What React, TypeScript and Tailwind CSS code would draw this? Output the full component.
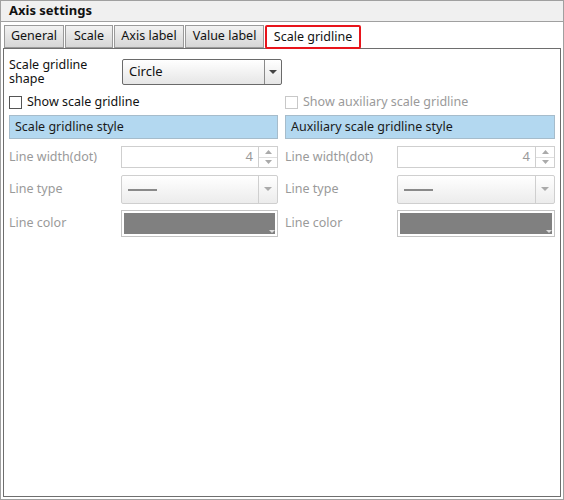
import React from 'react'

const font = { fontFamily: '"Noto Sans", "Open Sans", sans-serif' }

function Tab({ label, active, w }: { label: string; active?: boolean; w: string }) {
  if (active) {
    return (
      <div className={`${w} h-[24px] -mb-px flex items-center justify-center bg-white border-2 border-[#e8141b] rounded-[2px] text-[12.5px] text-[#111]`}>
        {label}
      </div>
    )
  }
  return (
    <div className={`${w} h-[23px] flex items-center justify-center bg-gradient-to-b from-[#f2f2f2] to-[#d6d6d6] border border-[#9a9a9a] text-[12.5px] text-[#111]`}>
      {label}
    </div>
  )
}

function SectionBar({ label }: { label: string }) {
  return (
    <div className="h-[24px] flex items-center pl-[5px] bg-[#b3d8f0] border border-[#a6bccb] text-[12.5px] text-[#1a1a1a]">
      {label}
    </div>
  )
}

function Caret({ color = '#555' }: { color?: string }) {
  return (
    <svg width="8" height="5" viewBox="0 0 8 5">
      <path d="M0 0 L8 0 L4 4 Z" fill={color} />
    </svg>
  )
}

function Checkbox({ label, disabled }: { label: string; disabled?: boolean }) {
  return (
    <div className={`flex items-center gap-[5px] h-[14px] text-[12.5px] ${disabled ? 'text-[#9a9a9a]' : 'text-[#111]'}`}>
      <span className={`w-[13px] h-[13px] border ${disabled ? 'border-[#c8c8c8]' : 'border-[#555]'} bg-white`} />
      {label}
    </div>
  )
}

function StyleRows() {
  return (
    <div className="flex flex-col mt-[7px] text-[12.5px] text-[#9a9a9a]">
      <div className="flex items-center h-[22px]">
        <div className="w-[112px]">Line width(dot)</div>
        <div className="flex-1 h-[22px] flex border border-[#cfcfcf] bg-white">
          <div className="flex-1 flex items-center justify-end pr-[5px] text-[13px] text-[#9a9a9a]">4</div>
          <div className="w-[19px] border-l border-[#cfcfcf] flex flex-col">
            <div className="flex-1 flex items-center justify-center border-b border-[#dedede]">
              <svg width="7" height="4" viewBox="0 0 7 4"><path d="M0 4 L7 4 L3.5 0 Z" fill="#aaa" /></svg>
            </div>
            <div className="flex-1 flex items-center justify-center">
              <svg width="7" height="4" viewBox="0 0 7 4"><path d="M0 0 L7 0 L3.5 4 Z" fill="#aaa" /></svg>
            </div>
          </div>
        </div>
      </div>
      <div className="flex items-center h-[29px] mt-[7px]">
        <div className="w-[112px]">Line type</div>
        <div className="flex-1 h-[29px] flex border border-[#cfcfcf] rounded-[2px] bg-gradient-to-b from-white to-[#ececec]">
          <div className="flex-1 flex items-center pl-[6px]">
            <div className="w-[29px] h-[2px] bg-[#8a8a8a]" />
          </div>
          <div className="w-[19px] border-l border-[#cfcfcf] flex items-center justify-center">
            <Caret color="#aaa" />
          </div>
        </div>
      </div>
      <div className="flex items-center h-[27px] mt-[6px]">
        <div className="w-[112px]">Line color</div>
        <div className="flex-1 h-[27px] border border-[#c4c4c4] bg-white p-[2px] relative">
          <div className="w-full h-full bg-[#808080]" />
          <svg className="absolute right-[2px] bottom-[2px]" width="6" height="4" viewBox="0 0 6 4">
            <path d="M0 0 L6 0 L3 3 Z" fill="#ddd" />
          </svg>
        </div>
      </div>
    </div>
  )
}

export default function App() {
  return (
    <div style={font} className="w-[564px] h-[500px] border border-[#a0a0a0] bg-white flex flex-col">
      <div className="h-[21px] shrink-0 bg-[#f0f0f0] border-b border-[#a0a0a0] flex items-center pl-[8px] text-[13px] font-bold text-[#111]">
        Axis settings
      </div>
      <div className="flex-1 flex flex-col ml-[2px] mr-[2px] mb-[2px] mt-[3px]">
        <div className="flex items-end pl-[1px] gap-px h-[23px] relative z-10">
          <Tab label="General" w="w-[60px]" />
          <Tab label="Scale" w="w-[48px]" />
          <Tab label="Axis label" w="w-[70px]" />
          <Tab label="Value label" w="w-[79px]" />
          <Tab label="Scale gridline" active w="w-[96px]" />
        </div>
        <div className="flex-1 border border-[#6e6e6e] pl-[5px] pr-[4px] pt-[9px]">
          <div className="flex items-center text-[12.5px] text-[#111]">
            <div className="w-[113px] flex flex-col">
              <div className="leading-[14px]">Scale gridline</div>
              <div className="leading-[14px]">shape</div>
            </div>
            <div className="w-[160px] h-[26px] flex border border-[#6a6a6a] rounded-[2px] bg-gradient-to-b from-white to-[#e6e6e6]">
              <div className="flex-1 flex items-center pl-[6px] text-[13px]">Circle</div>
              <div className="w-[17px] border-l border-[#8a8a8a] flex items-center justify-center">
                <Caret color="#444" />
              </div>
            </div>
          </div>
          <div className="flex gap-[7px] mt-[9px]">
            <div className="w-[269px] flex flex-col">
              <Checkbox label="Show scale gridline" />
              <div className="mt-[6px]">
                <SectionBar label="Scale gridline style" />
              </div>
              <StyleRows />
            </div>
            <div className="w-[270px] flex flex-col">
              <Checkbox label="Show auxiliary scale gridline" disabled />
              <div className="mt-[6px]">
                <SectionBar label="Auxiliary scale gridline style" />
              </div>
              <StyleRows />
            </div>
          </div>
        </div>
      </div>
    </div>
  )
}
